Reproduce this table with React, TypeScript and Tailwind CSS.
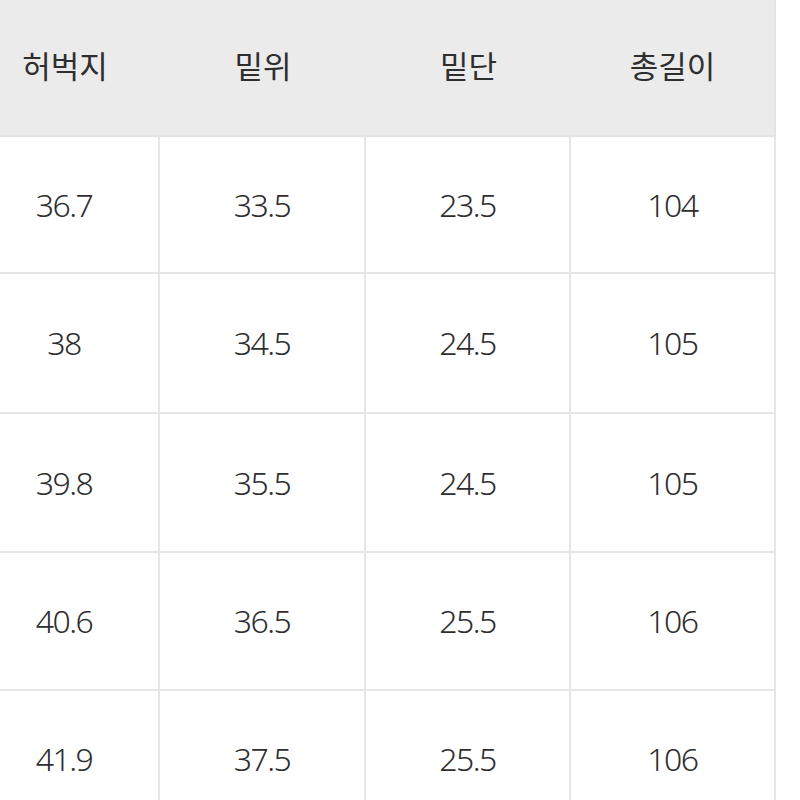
const headers = ["허벅지", "밑위", "밑단", "총길이"];

const rows = [
  { h: "h-[137px]", cells: ["36.7", "33.5", "23.5", "104"] },
  { h: "h-[140px]", cells: ["38", "34.5", "24.5", "105"] },
  { h: "h-[139px]", cells: ["39.8", "35.5", "24.5", "105"] },
  { h: "h-[138px]", cells: ["40.6", "36.5", "25.5", "106"] },
  { h: "h-[138px]", cells: ["41.9", "37.5", "25.5", "106"] },
];

const cols = "grid grid-cols-[190px_206px_205px_205px]";

export default function App() {
  return (
    <div className="w-[800px] h-[800px] overflow-hidden bg-white font-['Noto_Sans','Noto_Sans_CJK_KR',sans-serif] text-[#2e2e2e]">
      <div className="ml-[-30px] w-[806px]">
        {/* header */}
        <div className={`${cols} h-[137px] bg-[#ebebeb] border-b-2 border-[#e4e4e4]`}>
          {headers.map((t, i) => (
            <div
              key={t}
              className={`flex items-center justify-center pb-1 text-[31px] font-normal font-['Noto_Sans_CJK_KR',sans-serif] ${
                i === 3 ? "border-r-2 border-[#e4e4e4]" : ""
              }`}
            >
              {t}
            </div>
          ))}
        </div>

        {/* body */}
        {rows.map((row, r) => (
          <div key={r} className={`${cols} ${row.h}`}>
            {row.cells.map((c, i) => (
              <div
                key={i}
                className="flex items-center justify-center border-r-2 border-b-2 border-[#e6e6e6] text-[32px] font-light tracking-[-1.5px]"
              >
                {c}
              </div>
            ))}
          </div>
        ))}
      </div>
    </div>
  );
}
